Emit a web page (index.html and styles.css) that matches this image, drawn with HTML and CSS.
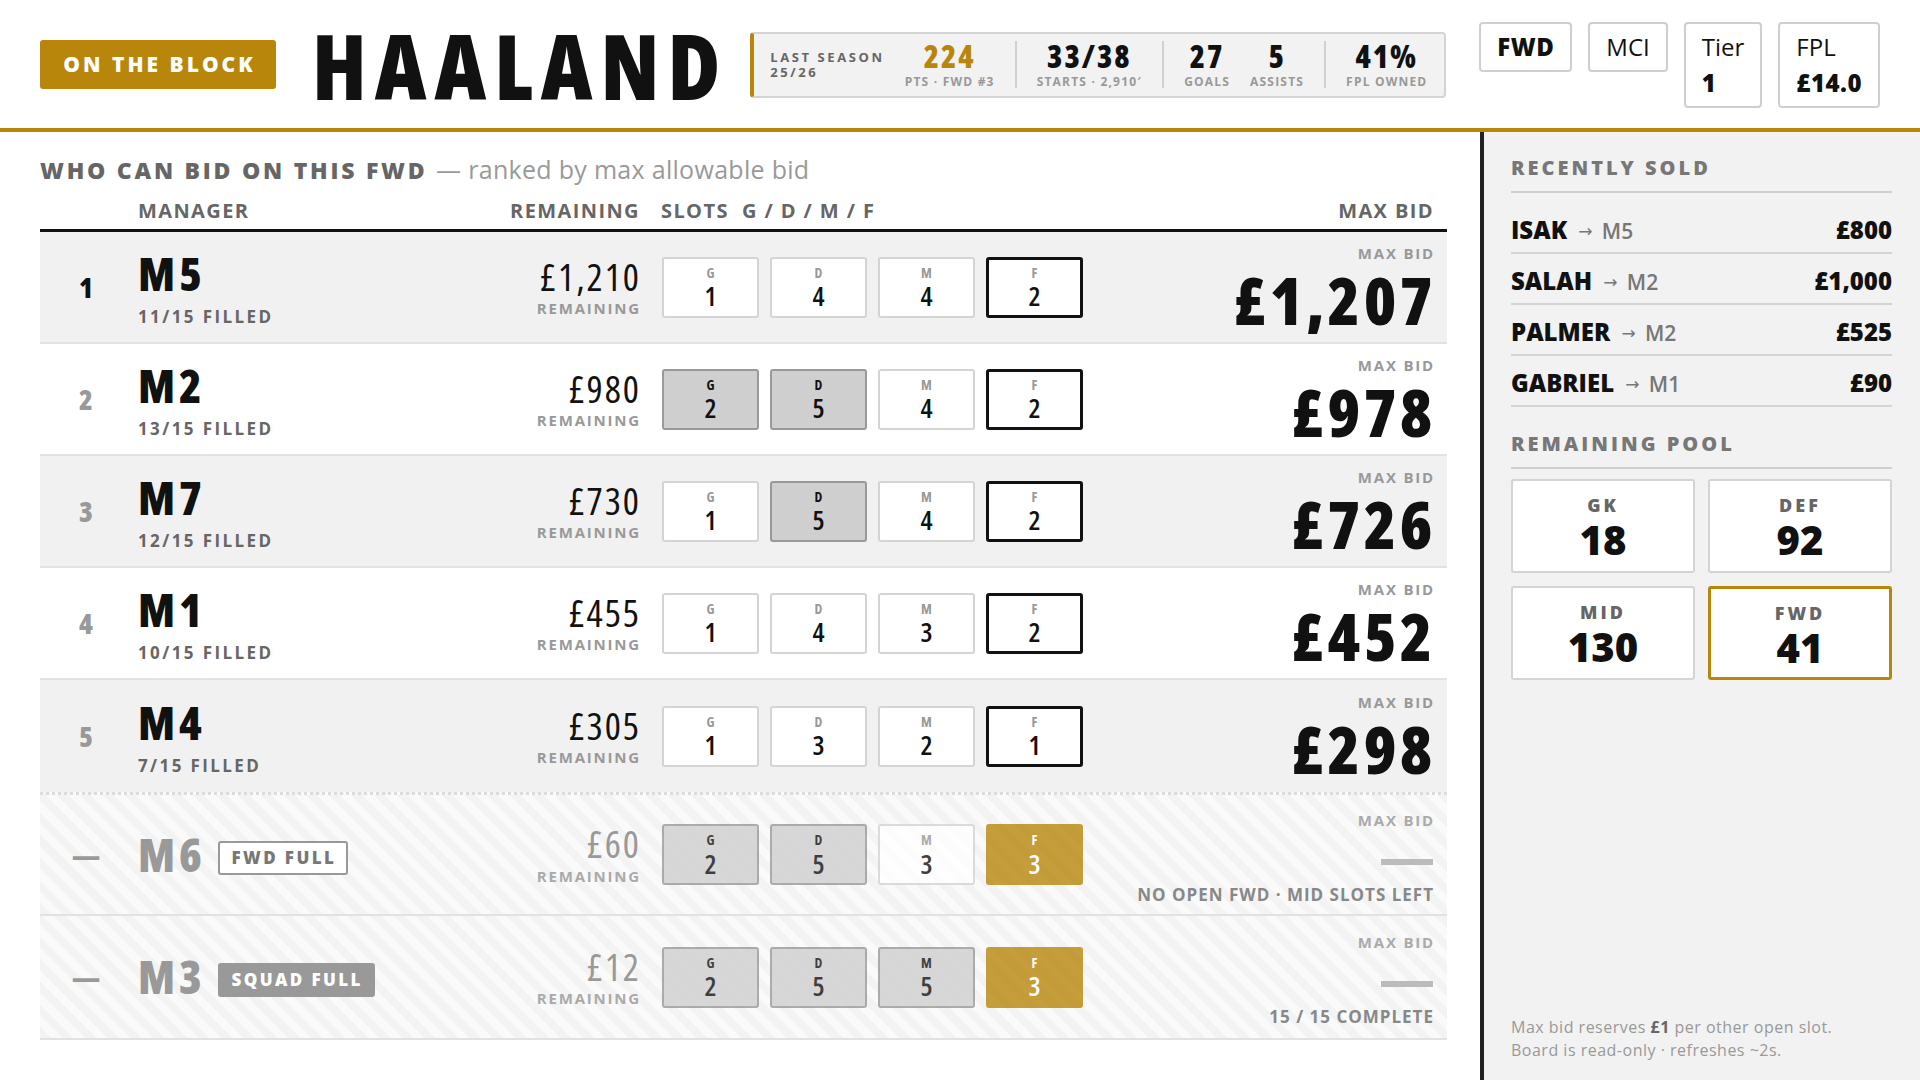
FILE: index.html
```html
<!DOCTYPE html>
<html>
<head>
    <title>Auction Board</title>
    <link rel="stylesheet" href="styles.css">
</head>
<body>
    <div class="top">
        <div class="badge">ON THE BLOCK</div>
        <div class="player">HAALAND</div>
        <div class="season">
            <div class="season-label">LAST SEASON<br>25/26</div>
            <div class="stat">
                <div class="stat-n gold">224</div>
                <div class="stat-l">PTS · FWD #3</div>
            </div>
            <div class="vr"></div>
            <div class="stat">
                <div class="stat-n">33/38</div>
                <div class="stat-l">STARTS · 2,910′</div>
            </div>
            <div class="vr"></div>
            <div class="stat">
                <div class="stat-n">27</div>
                <div class="stat-l">GOALS</div>
            </div>
            <div class="stat">
                <div class="stat-n">5</div>
                <div class="stat-l">ASSISTS</div>
            </div>
            <div class="vr"></div>
            <div class="stat">
                <div class="stat-n">41%</div>
                <div class="stat-l">FPL OWNED</div>
            </div>
        </div>
        <div class="tags">
            <div class="tag"><b>FWD</b></div>
            <div class="tag">MCI</div>
            <div class="tag">Tier<br><b>1</b></div>
            <div class="tag">FPL<br><b>£14.0</b></div>
        </div>
    </div>

    <div class="main">
        <div class="board">
            <h2 class="board-title">WHO CAN BID ON THIS FWD <span>— ranked by max allowable bid</span></h2>

            <div class="grid head">
                <div></div>
                <div>MANAGER</div>
                <div class="right">REMAINING</div>
                <div class="slots-head">SLOTS &nbsp;G / D / M / F</div>
                <div class="right">MAX BID</div>
            </div>

            <div class="grid row shade">
                <div class="rank first">1</div>
                <div><div class="mgr">M5</div><div class="filled">11/15 FILLED</div></div>
                <div class="right"><div class="cash">£1,210</div><div class="small">REMAINING</div></div>
                <div class="slots">
                    <div class="slot"><span>G</span><b>1</b></div>
                    <div class="slot"><span>D</span><b>4</b></div>
                    <div class="slot"><span>M</span><b>4</b></div>
                    <div class="slot target"><span>F</span><b>2</b></div>
                </div>
                <div class="right"><div class="small">MAX BID</div><div class="bid">£1,207</div></div>
            </div>

            <div class="grid row">
                <div class="rank">2</div>
                <div><div class="mgr">M2</div><div class="filled">13/15 FILLED</div></div>
                <div class="right"><div class="cash">£980</div><div class="small">REMAINING</div></div>
                <div class="slots">
                    <div class="slot full"><span>G</span><b>2</b></div>
                    <div class="slot full"><span>D</span><b>5</b></div>
                    <div class="slot"><span>M</span><b>4</b></div>
                    <div class="slot target"><span>F</span><b>2</b></div>
                </div>
                <div class="right"><div class="small">MAX BID</div><div class="bid">£978</div></div>
            </div>

            <div class="grid row shade">
                <div class="rank">3</div>
                <div><div class="mgr">M7</div><div class="filled">12/15 FILLED</div></div>
                <div class="right"><div class="cash">£730</div><div class="small">REMAINING</div></div>
                <div class="slots">
                    <div class="slot"><span>G</span><b>1</b></div>
                    <div class="slot full"><span>D</span><b>5</b></div>
                    <div class="slot"><span>M</span><b>4</b></div>
                    <div class="slot target"><span>F</span><b>2</b></div>
                </div>
                <div class="right"><div class="small">MAX BID</div><div class="bid">£726</div></div>
            </div>

            <div class="grid row">
                <div class="rank">4</div>
                <div><div class="mgr">M1</div><div class="filled">10/15 FILLED</div></div>
                <div class="right"><div class="cash">£455</div><div class="small">REMAINING</div></div>
                <div class="slots">
                    <div class="slot"><span>G</span><b>1</b></div>
                    <div class="slot"><span>D</span><b>4</b></div>
                    <div class="slot"><span>M</span><b>3</b></div>
                    <div class="slot target"><span>F</span><b>2</b></div>
                </div>
                <div class="right"><div class="small">MAX BID</div><div class="bid">£452</div></div>
            </div>

            <div class="grid row shade last-open">
                <div class="rank">5</div>
                <div><div class="mgr">M4</div><div class="filled">7/15 FILLED</div></div>
                <div class="right"><div class="cash">£305</div><div class="small">REMAINING</div></div>
                <div class="slots">
                    <div class="slot"><span>G</span><b>1</b></div>
                    <div class="slot"><span>D</span><b>3</b></div>
                    <div class="slot"><span>M</span><b>2</b></div>
                    <div class="slot target"><span>F</span><b>1</b></div>
                </div>
                <div class="right"><div class="small">MAX BID</div><div class="bid">£298</div></div>
            </div>

            <!-- managers who can't bid -->
            <div class="grid row out first-out">
                <div class="rank">—</div>
                <div class="mgr-line"><span class="mgr">M6</span><span class="flag">FWD FULL</span></div>
                <div class="right"><div class="cash">£60</div><div class="small">REMAINING</div></div>
                <div class="slots">
                    <div class="slot full"><span>G</span><b>2</b></div>
                    <div class="slot full"><span>D</span><b>5</b></div>
                    <div class="slot"><span>M</span><b>3</b></div>
                    <div class="slot gold"><span>F</span><b>3</b></div>
                </div>
                <div class="right nobid-cell"><div class="small">MAX BID</div><div class="nobid"></div><div class="why">NO OPEN FWD · MID SLOTS LEFT</div></div>
            </div>

            <div class="grid row out">
                <div class="rank">—</div>
                <div class="mgr-line"><span class="mgr">M3</span><span class="flag solid">SQUAD FULL</span></div>
                <div class="right"><div class="cash">£12</div><div class="small">REMAINING</div></div>
                <div class="slots">
                    <div class="slot full"><span>G</span><b>2</b></div>
                    <div class="slot full"><span>D</span><b>5</b></div>
                    <div class="slot full"><span>M</span><b>5</b></div>
                    <div class="slot gold"><span>F</span><b>3</b></div>
                </div>
                <div class="right nobid-cell"><div class="small">MAX BID</div><div class="nobid"></div><div class="why">15 / 15 COMPLETE</div></div>
            </div>
        </div>

        <div class="side">
            <h3>RECENTLY SOLD</h3>
            <div class="sold-list">
                <div class="sold"><span><b>ISAK</b> <i>→</i> <em>M5</em></span><b>£800</b></div>
                <div class="sold"><span><b>SALAH</b> <i>→</i> <em>M2</em></span><b>£1,000</b></div>
                <div class="sold"><span><b>PALMER</b> <i>→</i> <em>M2</em></span><b>£525</b></div>
                <div class="sold"><span><b>GABRIEL</b> <i>→</i> <em>M1</em></span><b>£90</b></div>
            </div>

            <h3 class="pool-title">REMAINING POOL</h3>
            <div class="pool">
                <div class="pool-box"><span>GK</span><b>18</b></div>
                <div class="pool-box"><span>DEF</span><b>92</b></div>
                <div class="pool-box"><span>MID</span><b>130</b></div>
                <div class="pool-box now"><span>FWD</span><b>41</b></div>
            </div>

            <p class="note">Max bid reserves <b>£1</b> per other open slot.<br>Board is read-only · refreshes ~2s.</p>
        </div>
    </div>
</body>
</html>
```

FILE: styles.css
```css
* {
    box-sizing: border-box;
}
body {
    margin: 0;
    font-family: "Open Sans", "Liberation Sans", sans-serif;
    color: #111;
    background-color: #fff;
}

/* header strip */
.top {
    display: flex;
    align-items: center;
    height: 132px;
    padding: 22px 40px 21px;
    border-bottom: 4px solid #b8860b;
}
.badge {
    width: 236px;
    height: 49px;
    line-height: 49px;
    text-align: center;
    padding-left: 3px;
    background-color: #b8860b;
    color: white;
    font-size: 21px;
    font-weight: 800;
    letter-spacing: 3px;
    border-radius: 3px;
}
.player {
    margin-left: 36px;
    font-size: 90px;
    font-weight: 800;
    font-stretch: 75%;
    letter-spacing: 8px;
    line-height: 1;
}
.season {
    display: flex;
    align-items: center;
    gap: 20px;
    height: 66px;
    margin-left: 22px;
    padding: 0 17px 0 16px;
    background-color: #f2f2f2;
    border: 2px solid #d4d4d4;
    border-left: 4px solid #b8860b;
    border-radius: 4px;
}
.season-label {
    font-size: 13px;
    font-weight: 700;
    letter-spacing: 2.6px;
    line-height: 1.1;
    color: #666;
}
.stat {
    text-align: center;
}
.stat-n {
    font-size: 31px;
    font-weight: 800;
    font-stretch: 75%;
    letter-spacing: 2px;
    line-height: 1.1;
}
.stat-l {
    font-size: 12px;
    font-weight: 700;
    letter-spacing: 1.2px;
    color: #999;
}
.gold {
    color: #b8860b;
}
.vr {
    width: 2px;
    height: 47px;
    background-color: #d0d0d0;
}
.tags {
    display: flex;
    align-items: flex-start;
    gap: 16px;
    margin-left: auto;
    height: 85px;
}
.tag {
    padding: 5px 16px;
    border: 2px solid #cfcfcf;
    border-radius: 4px;
    font-size: 24px;
    line-height: 36px;
}
.tag b {
    font-weight: 800;
    letter-spacing: 0.5px;
}

/* board + sidebar */
.main {
    display: flex;
    height: 948px;
}
.board {
    flex: 1;
    padding: 20px 33px 0 40px;
}
.board-title {
    margin: 0 0 11px;
    font-size: 23px;
    font-weight: 800;
    letter-spacing: 2.75px;
    color: #666;
}
.board-title span {
    font-size: 25px;
    font-weight: 400;
    letter-spacing: 0.3px;
    color: #999;
}
.grid {
    display: grid;
    grid-template-columns: 98px 1fr 140px 445px 349px;
    align-items: center;
    padding-right: 14px;
}
.head {
    padding-bottom: 5px;
    border-bottom: 3px solid #111;
    font-size: 20px;
    font-weight: 700;
    letter-spacing: 1.4px;
    color: #666;
}
.head .right {
    margin-right: -1px;
}
.slots-head {
    padding-left: 22px;
}
.right {
    text-align: right;
}
.row {
    height: 112px;
    border-bottom: 2px solid #e2e2e2;
}
.shade {
    background-color: #f1f1f1;
}
.last-open {
    border-bottom: none;
}
.rank {
    text-align: center;
    padding-right: 6px;
    font-size: 28px;
    font-weight: 800;
    font-stretch: 75%;
    color: #999;
}
.rank.first {
    color: #111;
}
.mgr {
    font-size: 46px;
    font-weight: 800;
    font-stretch: 75%;
    letter-spacing: 3.8px;
    line-height: 1.2;
}
.filled {
    margin-top: 3px;
    font-size: 17px;
    font-weight: 700;
    letter-spacing: 2.4px;
    color: #666;
}
.cash {
    font-size: 38px;
    font-stretch: 75%;
    letter-spacing: 2px;
    line-height: 1.15;
    margin-right: -2px;
}
.small {
    font-size: 15px;
    font-weight: 700;
    letter-spacing: 1.8px;
    line-height: 1.4;
    margin-right: -2px;
    color: #999;
}
.slots {
    display: flex;
    gap: 11px;
    padding-left: 23px;
}
.slot {
    display: flex;
    flex-direction: column;
    align-items: center;
    width: 97px;
    height: 61px;
    padding-top: 6px;
    background-color: white;
    border: 2px solid #d4d4d4;
    border-radius: 3px;
    font-stretch: 75%;
}
.slot span {
    font-size: 14px;
    font-weight: 700;
    line-height: 1.2;
    color: #999;
}
.slot b {
    font-size: 27px;
    font-weight: 600;
    line-height: 1.1;
}
.slot.full {
    background-color: #cfcfcf;
    border-color: #999;
}
.slot.full span {
    color: #111;
}
.slot.target {
    border: 3px solid #111;
    padding-top: 5px;
}
.slot.gold {
    background-color: #b8860b;
    border-color: #b8860b;
}
.slot.gold span,
.slot.gold b {
    color: white;
}
.bid {
    font-size: 66px;
    font-weight: 800;
    font-stretch: 75%;
    letter-spacing: 3.5px;
    line-height: 1;
    margin-top: 2px;
    margin-right: -3px;
}

/* rows that can't bid */
.out {
    height: 124px;
    background: repeating-linear-gradient(45deg, #f3f3f3 0 8px, #fafafa 8px 16px);
    color: #999;
}
.first-out {
    border-top: 3px dotted #dcdcdc;
}
.out .slots {
    opacity: 0.8;
}
.out .slot b {
    color: #111;
}
.out .slot.gold b {
    color: white;
}
.out .cash {
    color: #999;
}
.out .small {
    color: #aaa;
}
.mgr-line {
    display: flex;
    align-items: center;
    gap: 12px;
}
.flag {
    padding: 0 10px 0 12px;
    margin-top: 6px;
    font-size: 17px;
    font-weight: 800;
    letter-spacing: 2.4px;
    line-height: 30px;
    color: #777;
    background-color: white;
    border: 2px solid #999;
    border-radius: 3px;
}
.flag.solid {
    background-color: #999;
    color: white;
    border-color: #999;
}
.nobid-cell {
    padding-top: 6px;
}
.nobid {
    width: 52px;
    height: 6px;
    margin: 28px 0 18px auto;
    background-color: #bbb;
}
.why {
    font-size: 17px;
    font-weight: 700;
    letter-spacing: 1px;
    margin-right: -1px;
    color: #888;
}

/* sidebar */
.side {
    display: flex;
    flex-direction: column;
    width: 440px;
    padding: 22px 28px 18px 27px;
    background-color: #f2f2f2;
    border-left: 4px solid #222;
}
.side h3 {
    margin: 0;
    padding-bottom: 10px;
    border-bottom: 2px solid #cfcfcf;
    font-size: 20px;
    font-weight: 800;
    letter-spacing: 3px;
    color: #777;
}
.sold-list {
    padding-top: 10px;
}
.sold {
    display: flex;
    justify-content: space-between;
    align-items: center;
    height: 51px;
    padding-top: 4px;
    border-bottom: 2px solid #d4d4d4;
    font-size: 24px;
}
.sold b {
    font-weight: 800;
}
.sold i {
    font-style: normal;
    font-family: "DejaVu Sans", sans-serif;
    font-size: 17px;
    color: #777;
    margin: 0 3px 0 5px;
    position: relative;
    top: -2px;
}
.sold em {
    font-style: normal;
    font-size: 21px;
    font-weight: 600;
    color: #777;
}
.pool-title {
    margin-top: 23px !important;
}
.pool {
    display: grid;
    grid-template-columns: 1fr 1fr;
    gap: 13px;
    margin-top: 10px;
}
.pool-box {
    display: flex;
    flex-direction: column;
    align-items: center;
    height: 94px;
    padding-top: 12px;
    background-color: white;
    border: 2px solid #d4d4d4;
    border-radius: 3px;
}
.pool-box span {
    font-size: 18px;
    font-weight: 800;
    letter-spacing: 3px;
    color: #666;
}
.pool-box b {
    font-size: 40px;
    font-weight: 800;
    line-height: 1.15;
}
.pool-box.now {
    border: 3px solid #b8860b;
}
.note {
    margin: auto 0 0;
    font-size: 16px;
    line-height: 23px;
    letter-spacing: 0.5px;
    color: #999;
}
.note b {
    color: #666;
}
```
